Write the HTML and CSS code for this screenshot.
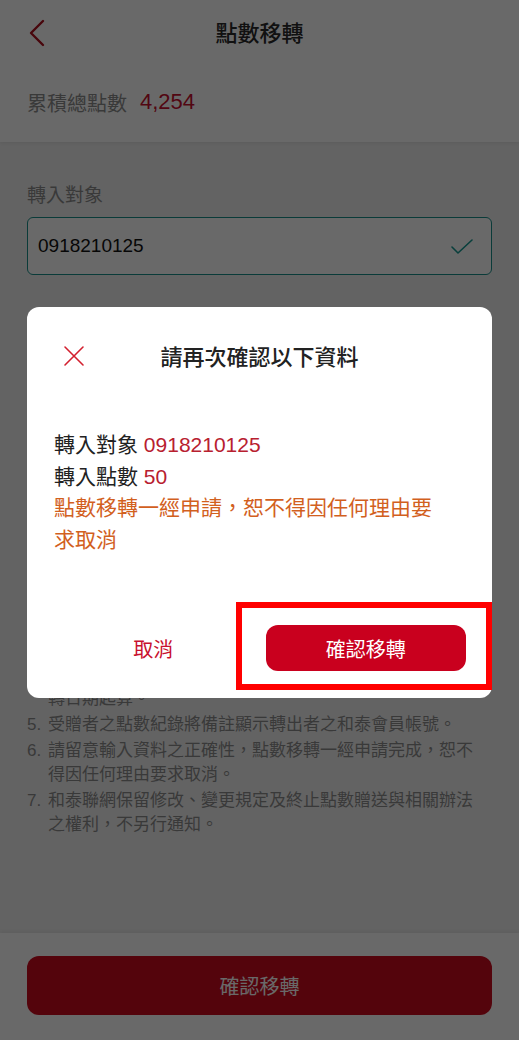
FILE: index.html
```html
<!DOCTYPE html>
<html lang="zh-Hant">
<head>
    <meta charset="UTF-8">
    <meta name="viewport" content="width=device-width, initial-scale=1.0">
    <title>點數移轉</title>
    <link rel="stylesheet" href="styles.css">
</head>
<body>

    <div class="page">
        <header class="topbar">
            <a class="back" href="#">
                <svg width="16" height="28" viewBox="0 0 16 28"><polyline points="14,2 2,14 14,26" fill="none" stroke="#b0101e" stroke-width="2.4" stroke-linecap="round" stroke-linejoin="round"/></svg>
            </a>
            <h1>點數移轉</h1>
        </header>

        <div class="summary">
            <span class="summary-label">累積總點數</span>
            <span class="summary-value">4,254</span>
        </div>

        <main class="content">
            <div class="field">
                <label for="target">轉入對象</label>
                <div class="input-wrap">
                    <input id="target" type="text" value="0918210125">
                    <svg class="check" width="22" height="16" viewBox="0 0 22 16"><polyline points="1,8 7,14 21,1" fill="none" stroke="#169a93" stroke-width="1.6" stroke-linecap="round" stroke-linejoin="round"/></svg>
                </div>
            </div>

            <div class="field">
                <label for="points">轉入點數</label>
                <div class="input-wrap">
                    <input id="points" type="text" value="50">
                </div>
            </div>

            <h2 class="notes-title">注意事項</h2>
            <ol class="notes">
                <li><span>1.</span><p>點數移轉僅限和泰聯網會員之間進行，移轉前請確認受贈者已完成註冊。</p></li>
                <li><span>2.</span><p>每次移轉點數最低為1點，單日移轉點數上限依和泰聯網公告為準。</p></li>
                <li><span>3.</span><p>點數移轉完成後，轉出者之點數將立即扣除，受贈者之點數將於移轉完成後即時入帳，可於點數紀錄中查詢，如有疑問請洽和泰聯網客服中心。</p></li>
                <li><span>4.</span><p>受贈者獲得之點數效期，依原點數到期日計算，自點數移轉日期起算。</p></li>
                <li><span>5.</span><p>受贈者之點數紀錄將備註顯示轉出者之和泰會員帳號。</p></li>
                <li><span>6.</span><p>請留意輸入資料之正確性，點數移轉一經申請完成，恕不得因任何理由要求取消。</p></li>
                <li><span>7.</span><p>和泰聯網保留修改、變更規定及終止點數贈送與相關辦法<br>之權利，不另行通知。</p></li>
            </ol>
        </main>

        <footer class="bottombar">
            <button class="primary-button">確認移轉</button>
        </footer>
    </div>

    <div class="overlay">
        <div class="dialog">
            <div class="dialog-head">
                <button class="close">
                    <svg width="22" height="22" viewBox="0 0 22 22"><path d="M2 2 L20 20 M20 2 L2 20" stroke="#d3202f" stroke-width="1.6" stroke-linecap="round"/></svg>
                </button>
                <h3>請再次確認以下資料</h3>
            </div>
            <div class="dialog-body">
                <p>轉入對象 <span class="value">0918210125</span></p>
                <p>轉入點數 <span class="value">50</span></p>
                <p class="warning">點數移轉一經申請，恕不得因任何理由要求取消</p>
            </div>
            <div class="dialog-actions">
                <button class="cancel">取消</button>
                <button class="confirm">確認移轉<span class="highlight"></span></button>
            </div>
        </div>
    </div>

</body>
</html>
```

FILE: styles.css
```css
* {
    box-sizing: border-box;
}
body {
    font-family: "Liberation Sans", "Noto Sans CJK TC", sans-serif;
    margin: 0;
    padding: 0;
    background-color: #f1f1f1;
    color: #222;
}
.page {
    height: 100vh;
    display: flex;
    flex-direction: column;
    overflow: hidden;
}
.topbar {
    height: 62px;
    background: #fff;
    display: flex;
    align-items: center;
    justify-content: center;
    position: relative;
    flex-shrink: 0;
}
.topbar h1 {
    margin: 0;
    font-size: 22px;
    font-weight: 500;
    color: #2a2a2a;
}
.back {
    position: absolute;
    left: 29px;
    top: 19px;
    display: flex;
}
.summary {
    height: 80px;
    background: #fff;
    display: flex;
    align-items: center;
    padding: 0 27px;
    font-size: 20px;
    box-shadow: 0 2px 3px rgba(0, 0, 0, 0.06);
    flex-shrink: 0;
}
.summary-label {
    color: #8c8c8c;
    margin-right: 13px;
}
.summary-value {
    color: #c8102e;
    font-size: 22px;
}
.content {
    flex: 1;
    padding: 41px 0 0 27px;
}
.field {
    padding-right: 27px;
    margin-bottom: 48px;
}
.field label {
    display: block;
    font-size: 19px;
    line-height: 26px;
    color: #8c8c8c;
    margin-bottom: 8px;
}
.input-wrap {
    position: relative;
}
.input-wrap input {
    width: 100%;
    height: 58px;
    padding: 0 10px;
    border: 1.5px solid #1a8f8a;
    border-radius: 6px;
    background: #fff;
    font-family: inherit;
    font-size: 19px;
    color: #111;
}
.check {
    position: absolute;
    right: 19px;
    top: 22px;
}
.notes-title {
    margin: 31px 0 0;
    font-size: 19px;
    line-height: 26px;
    font-weight: 500;
    color: #555;
}
.notes {
    list-style: none;
    margin: 0;
    padding: 0 41px 0 0;
    font-size: 17px;
    line-height: 24px;
    color: #8c8c8c;
}
.notes li {
    display: flex;
    margin-bottom: 2px;
}
.notes li span {
    width: 21px;
    flex-shrink: 0;
}
.notes li p {
    margin: 0;
    flex: 1;
}
.bottombar {
    height: 107px;
    background: #fff;
    padding: 23px 27px 25px;
    box-shadow: 0 -2px 4px rgba(0, 0, 0, 0.06);
    flex-shrink: 0;
}
.primary-button {
    width: 100%;
    height: 59px;
    border: none;
    border-radius: 12px;
    background: #cc0a1e;
    color: #fff;
    font-family: inherit;
    font-size: 20px;
}
.overlay {
    position: fixed;
    inset: 0;
    background: rgba(0, 0, 0, 0.59);
    padding: 307px 27px 0;
}
.dialog {
    background: #fff;
    border-radius: 12px;
    padding: 30px 26px 27px;
}
.dialog-head {
    height: 36px;
    display: flex;
    align-items: center;
    justify-content: center;
    position: relative;
}
.dialog-head h3 {
    margin: 0;
    font-size: 22px;
    font-weight: 500;
    color: #222;
}
.close {
    position: absolute;
    left: 10px;
    top: 8px;
    padding: 0;
    border: none;
    background: none;
    display: flex;
}
.dialog-body {
    margin-top: 56px;
    padding: 0 22px 0 1px;
    font-size: 21px;
    line-height: 31.5px;
}
.dialog-body p {
    margin: 0;
}
.value {
    color: #b8202f;
}
.warning {
    color: #d2601e;
}
.dialog-actions {
    display: flex;
    gap: 12px;
    margin-top: 70px;
}
.dialog-actions button {
    flex: 1;
    height: 46px;
    border: none;
    font-family: inherit;
    font-size: 20px;
}
.cancel {
    background: none;
    color: #c8102e;
}
.confirm {
    position: relative;
    border-radius: 12px;
    background: #c9001e;
    color: #fff;
}
.highlight {
    position: absolute;
    top: -23px;
    left: -30px;
    right: -26px;
    bottom: -19px;
    border: 6px solid #ff0000;
}
```
